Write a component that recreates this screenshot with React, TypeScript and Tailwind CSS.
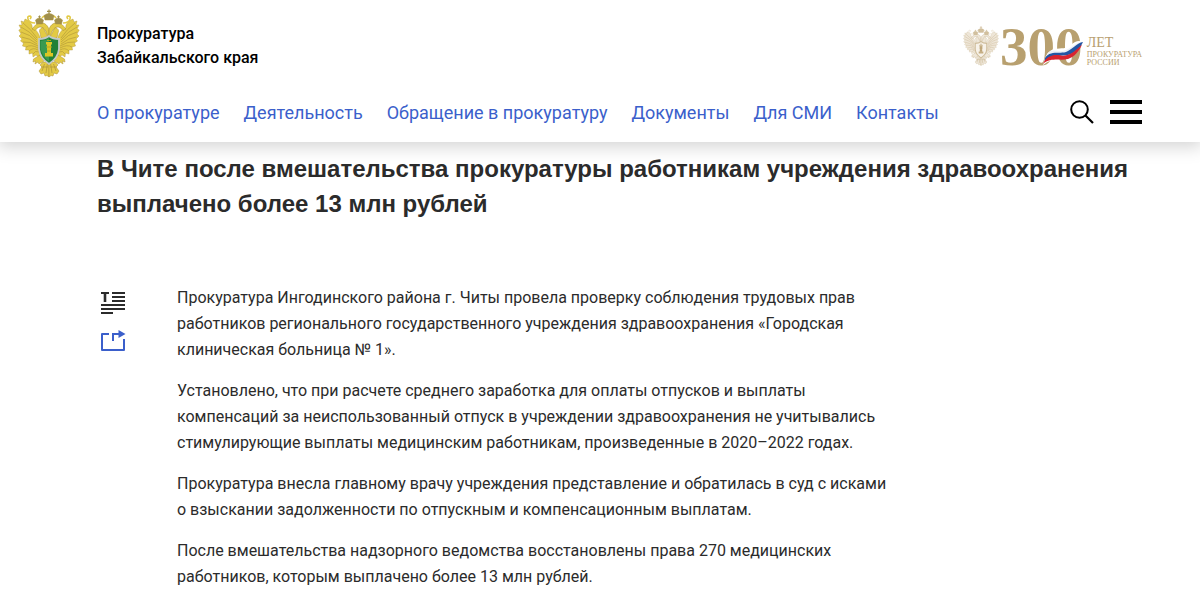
import React from 'react';

const navItems = [
  'О прокуратуре',
  'Деятельность',
  'Обращение в прокуратуру',
  'Документы',
  'Для СМИ',
  'Контакты',
];

const paragraphs = [
  'Прокуратура Ингодинского района г. Читы провела проверку соблюдения трудовых прав работников регионального государственного учреждения здравоохранения «Городская клиническая больница № 1».',
  'Установлено, что при расчете среднего заработка для оплаты отпусков и выплаты компенсаций за неиспользованный отпуск в учреждении здравоохранения не учитывались стимулирующие выплаты медицинским работникам, произведенные в 2020–2022 годах.',
  'Прокуратура внесла главному врачу учреждения представление и обратилась в суд с исками о взыскании задолженности по отпускным и компенсационным выплатам.',
  'После вмешательства надзорного ведомства восстановлены права 270 медицинских работников, которым выплачено более 13 млн рублей.',
];

function EagleHalf({ fill, line, crown }: { fill: string; line: string; crown: string }) {
  return (
    <g>
      {/* wing */}
      <path
        d="M22 28 C20 23 17 19 14 19 C15 16 12 12 7 10 L6 13 L3 12 L4 16 L1 16 L3 20 L0.8 21 L3 25 L1 27 L4 30 L2.5 32 L5.5 34 L4.5 37 L8 38 L7.5 41 L11 41 L11 45 L14.5 44 L15 48 L18 46 L22 49 Z"
        fill={fill}
        stroke={line}
        strokeWidth="0.4"
      />
      <path
        d="M5 14 Q13 20 19 29 M3 18 Q12 22 19 31 M3 23 Q12 25 19 33 M3.5 28 Q12 29 19 35 M5 33 Q12 32 20 37 M8 38 Q13 35 20 39 M11 42 Q15 38 20 41 M15 45 Q17 41 21 43"
        fill="none"
        stroke={line}
        strokeWidth="0.6"
      />
      {/* neck, head and beak */}
      <path
        d="M31 31 C29 25 28 21 25 19 C22 17 20 18 17 21.5 L14 20 C16 18 17 16 19 15 C24 12 30 15 31 21 Z"
        fill={fill}
        stroke={line}
        strokeWidth="0.6"
      />
      <path d="M25 18.5 Q20 20 22 24 L23 29 L30 28 Z" fill={fill} stroke={line} strokeWidth="0.5" />
      {/* side crown */}
      <path d="M18.5 15 L17.5 11 Q21.5 7 25.5 11 L24.5 15 Z" fill={crown} stroke={line} strokeWidth="0.5" />
      <path d="M21.5 6.5 V9.5 M20.2 7.8 H22.8" stroke={crown} strokeWidth="1" />
      {/* ribbon */}
      <path d="M17 14 Q11 14 10 10 Q9 7 12 7 Q14 8 12 10 M24 9 Q26 6 28 8" fill="none" stroke={fill} strokeWidth="1.6" />
      {/* leg and claw */}
      <path d="M22 46 L15.5 50 L15 53 L17.5 52 L17 55 L20 53 L21 55 L26 52 Z" fill={fill} stroke={line} strokeWidth="0.5" />
      {/* tail */}
      <path
        d="M31 53 L25 53 L22 56 L24 58 L21 62 L23 65 L26 64 L27 67 L29 66.5 L31 68 Z"
        fill={fill}
        stroke={line}
        strokeWidth="0.5"
      />
      <path d="M29.5 54 L28 64 M26.5 55 L24 62 M23 58 H30" fill="none" stroke={line} strokeWidth="0.7" />
    </g>
  );
}

function Eagle({ gold = false, className }: { gold?: boolean; className: string }) {
  const fill = gold ? '#eee6d8' : '#e3ca45';
  const line = gold ? '#c4ae86' : '#ad9338';
  const crown = gold ? '#d2c09e' : '#a08f4c';
  const shield = gold ? '#f7f2e9' : '#218037';
  return (
    <svg viewBox="0 0 62 69" className={className} aria-hidden="true">
      <EagleHalf fill={fill} line={line} crown={crown} />
      <g transform="translate(62 0) scale(-1 1)">
        <EagleHalf fill={fill} line={line} crown={crown} />
      </g>
      <path d="M27 11 L26 6.5 Q31 2.5 36 6.5 L35 11 Z" fill={crown} stroke={line} strokeWidth="0.5" />
      <path d="M31 0.5 V5 M29 2.3 H33" stroke={crown} strokeWidth="1.2" />
      <path
        d="M31 27 Q27 30 21 30 V40 Q22 49 31 55 Q40 49 41 40 V30 Q35 30 31 27 Z"
        fill={shield}
        stroke={gold ? '#cdbb98' : '#c3c8c8'}
        strokeWidth="1.8"
      />
      {!gold && <path d="M31 29 Q27 32 22.5 32 V40 Q24 47 31 52.5 Z" fill="#3a9a50" />}
      <path
        d="M28 33 H34 V35.5 H33 V44 H35 V47.5 H27 V44 H29 V35.5 H28 Z"
        fill={gold ? '#c5ae84' : '#dcc624'}
      />
      <path d="M29 31.5 H33 M28 38 H34 M29 42 H33" stroke={gold ? '#b59a6a' : '#b5a41e'} strokeWidth="1" />
    </svg>
  );
}

function AnniversaryMark() {
  return (
    <svg viewBox="0 0 86 44" className="h-11 w-[86px] overflow-visible" role="img" aria-label="300">
      <text
        x="-1"
        y="40"
        fontSize="55"
        fontWeight="700"
        fill="#b8a06f"
        className="font-['Liberation_Serif',serif]"
      >
        300
      </text>
      <path
        d="M42 40 C44 31 47 25 54 24 C60 23 66 24 70 20 C74 16 78 15 82 17 C80 23 76 29 70 32 C62 35 53 31 42 40 Z"
        fill="#fff"
      />
      <path
        d="M46 29 C51 22 58 28 65 25 C72 22 75 17 82 17 C77 20 75 24 69 28 C60 31 52 27 46 31 Z"
        fill="#edf0f6"
      />
      <path
        d="M44 33 C49 25 58 29 65 27 C72 24 76 18 82 17 C80 22 75 27 69 29.5 C60 32 51 29 43.5 36 Z"
        fill="#2456a4"
      />
      <path
        d="M42 39 C45 31 53 29 60 30.5 C69 32 76 24 81 19.5 C78 27 73 32 67 34 C59 36 50 32 42 39 Z"
        fill="#d8232f"
      />
    </svg>
  );
}

export default function App() {
  return (
    <div className="bg-white font-['Roboto',sans-serif] text-[#2b2b2b]">
      <header className="relative bg-white pb-[17px] shadow-[0_3px_16px_2px_rgba(0,0,0,0.17)]">
        <div className="flex items-start justify-between pt-[9px] pr-[58px] pl-[18px]">
          <a href="#home" className="flex items-start gap-[17px] font-medium text-black">
            <Eagle className="h-[69px] w-[62px]" />
            <span className="pt-[13px] text-base leading-6">
              Прокуратура
              <br />
              Забайкальского края
            </span>
          </a>
          <a href="#anniversary" className="flex items-start pt-4 text-[#b8a06f]">
            <Eagle gold className="mt-px h-10 w-9" />
            <span className="ml-0.5">
              <AnniversaryMark />
            </span>
            <span className="pt-3 font-['Liberation_Serif',serif]">
              <span className="block text-sm leading-3">ЛЕТ</span>
              <span className="block pt-0.5 text-[8px] leading-2">
                ПРОКУРАТУРА
                <br />
                РОССИИ
              </span>
            </span>
          </a>
        </div>
        <div className="flex items-end justify-between pt-[22px] pr-[58px] pl-[97px]">
          <nav className="flex gap-6 text-lg leading-6 text-[#3b5fcb]">
            {navItems.map((item) => (
              <a key={item} href="#section" className="whitespace-nowrap">
                {item}
              </a>
            ))}
          </nav>
          <div className="flex items-center gap-4 pb-px">
            <button type="button" aria-label="Поиск" className="block">
              <svg viewBox="0 0 24 24" className="size-6" fill="none" stroke="#000" strokeWidth="2">
                <circle cx="9.5" cy="9.5" r="8.3" />
                <path d="M15.5 15.5 L23 23" strokeWidth="2.2" />
              </svg>
            </button>
            <button type="button" aria-label="Меню" className="block">
              <svg viewBox="0 0 32 24" className="h-6 w-8">
                <path d="M0 0 H32 V4 H0 Z M0 10 H32 V14 H0 Z M0 20 H32 V24 H0 Z" fill="#000" />
              </svg>
            </button>
          </div>
        </div>
      </header>

      <main className="pt-[9px] pr-[58px] pl-[97px]">
        <h1 className="font-['Liberation_Sans',sans-serif] text-2xl leading-[35px] font-bold">
          В Чите после вмешательства прокуратуры работникам учреждения здравоохранения выплачено более
          13 млн рублей
        </h1>
        <div className="flex items-start gap-[51px] pt-16">
          <div className="flex w-[29px] flex-col gap-[15px] pt-[6px] pl-[3px]">
            <button type="button" aria-label="Размер текста" className="block">
              <svg viewBox="0 0 26 24" className="h-6 w-[26px]" fill="none" stroke="#2b2b2b" strokeWidth="2">
                <path d="M1 2 H9 M12 2 H25 M12 6 H25 M12 10 H25 M1 14 H25 M1 18 H25 M1 22 H13" />
                <path d="M5 2 V11" strokeWidth="2.6" />
              </svg>
            </button>
            <button type="button" aria-label="Поделиться" className="block">
              <svg viewBox="0 0 26 22" className="h-[22px] w-[26px]" fill="none" stroke="#3b5fcb" strokeWidth="2">
                <path d="M9 4 H2 V20 H24 V9" strokeLinejoin="round" />
                <path d="M13 11 V4 H20" />
                <path d="M18.5 0 L25.5 4 L18.5 8 Z" fill="#3b5fcb" stroke="none" />
              </svg>
            </button>
          </div>
          <article className="flex max-w-[712px] flex-col gap-[15px] text-base leading-[26px]">
            {paragraphs.map((text) => (
              <p key={text}>{text}</p>
            ))}
          </article>
        </div>
      </main>
    </div>
  );
}
